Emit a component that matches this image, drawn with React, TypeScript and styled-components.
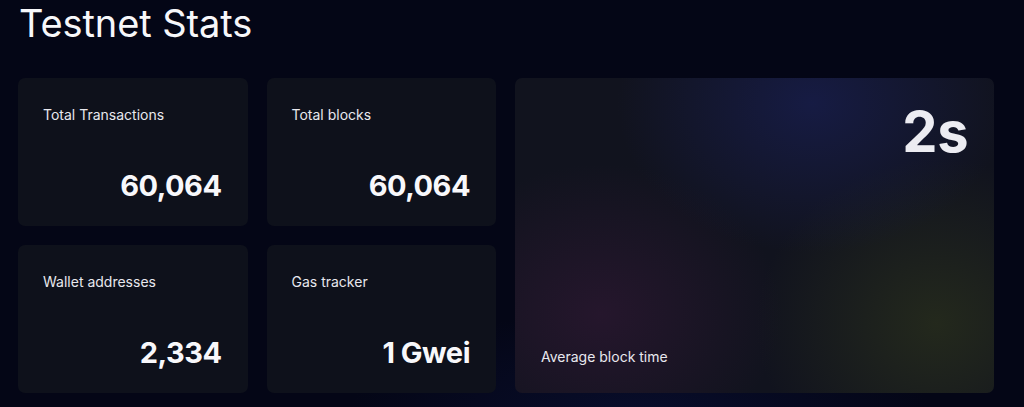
import styled, { createGlobalStyle } from 'styled-components'

const GlobalStyle = createGlobalStyle`
  html, body {
    margin: 0;
    padding: 0;
    background: #040616;
  }
  body {
    font-family: Inter, "Noto Sans", sans-serif;
    color: #f4f4f7;
    -webkit-font-smoothing: antialiased;
  }
`

const Page = styled.main`
  min-height: 407px;
  box-sizing: border-box;
  padding: 2px 30px 0 18px;
  background:
    radial-gradient(ellipse 420px 160px at 640px 420px, rgba(14, 22, 70, 0.45), transparent 70%),
    #040616;
  overflow: hidden;
`

const Title = styled.h1`
  margin: 0 0 34px 1px;
  font-size: 38px;
  line-height: 42px;
  font-weight: 400;
  letter-spacing: -0.1px;
  color: #f7f7fa;
`

const Grid = styled.section`
  display: grid;
  grid-template-columns: 229.5px 229.5px 479px;
  grid-template-rows: 148px 148px;
  gap: 19px;
`

const Card = styled.div`
  display: flex;
  flex-direction: column;
  justify-content: space-between;
  box-sizing: border-box;
  padding: 27px 26px 22px 25px;
  border-radius: 7px;
  background: #0e111b;
`

const FeatureCard = styled(Card)`
  grid-column: 3;
  grid-row: 1 / span 2;
  padding: 25px 26px 26px 26px;
  background:
    radial-gradient(ellipse 260px 200px at 62% 8%, rgba(24, 30, 80, 0.75), transparent 75%),
    radial-gradient(ellipse 240px 200px at 18% 75%, rgba(48, 24, 52, 0.65), transparent 75%),
    radial-gradient(ellipse 240px 220px at 88% 78%, rgba(40, 46, 28, 0.8), transparent 75%),
    #11131e;
`

const Label = styled.div`
  font-size: 14px;
  line-height: 20px;
  color: #e8e8ee;
`

const Value = styled.div<{ $big?: boolean }>`
  text-align: right;
  font-weight: 700;
  font-size: ${({ $big }) => ($big ? '56px' : '29px')};
  line-height: ${({ $big }) => ($big ? '58px' : '36px')};
  letter-spacing: ${({ $big }) => ($big ? '-0.5px' : '-0.5px')};
  color: ${({ $big }) => ($big ? '#ececf2' : '#f8f8fb')};
`

const stats = [
  { label: 'Total Transactions', value: '60,064' },
  { label: 'Total blocks', value: '60,064' },
  { label: 'Wallet addresses', value: '2,334' },
  { label: 'Gas tracker', value: '1 Gwei' },
]

export default function App() {
  return (
    <Page>
      <GlobalStyle />
      <Title>Testnet Stats</Title>
      <Grid>
        {stats.map((s) => (
          <Card key={s.label}>
            <Label>{s.label}</Label>
            <Value>{s.value}</Value>
          </Card>
        ))}
        <FeatureCard>
          <Value $big>2s</Value>
          <Label>Average block time</Label>
        </FeatureCard>
      </Grid>
    </Page>
  )
}
